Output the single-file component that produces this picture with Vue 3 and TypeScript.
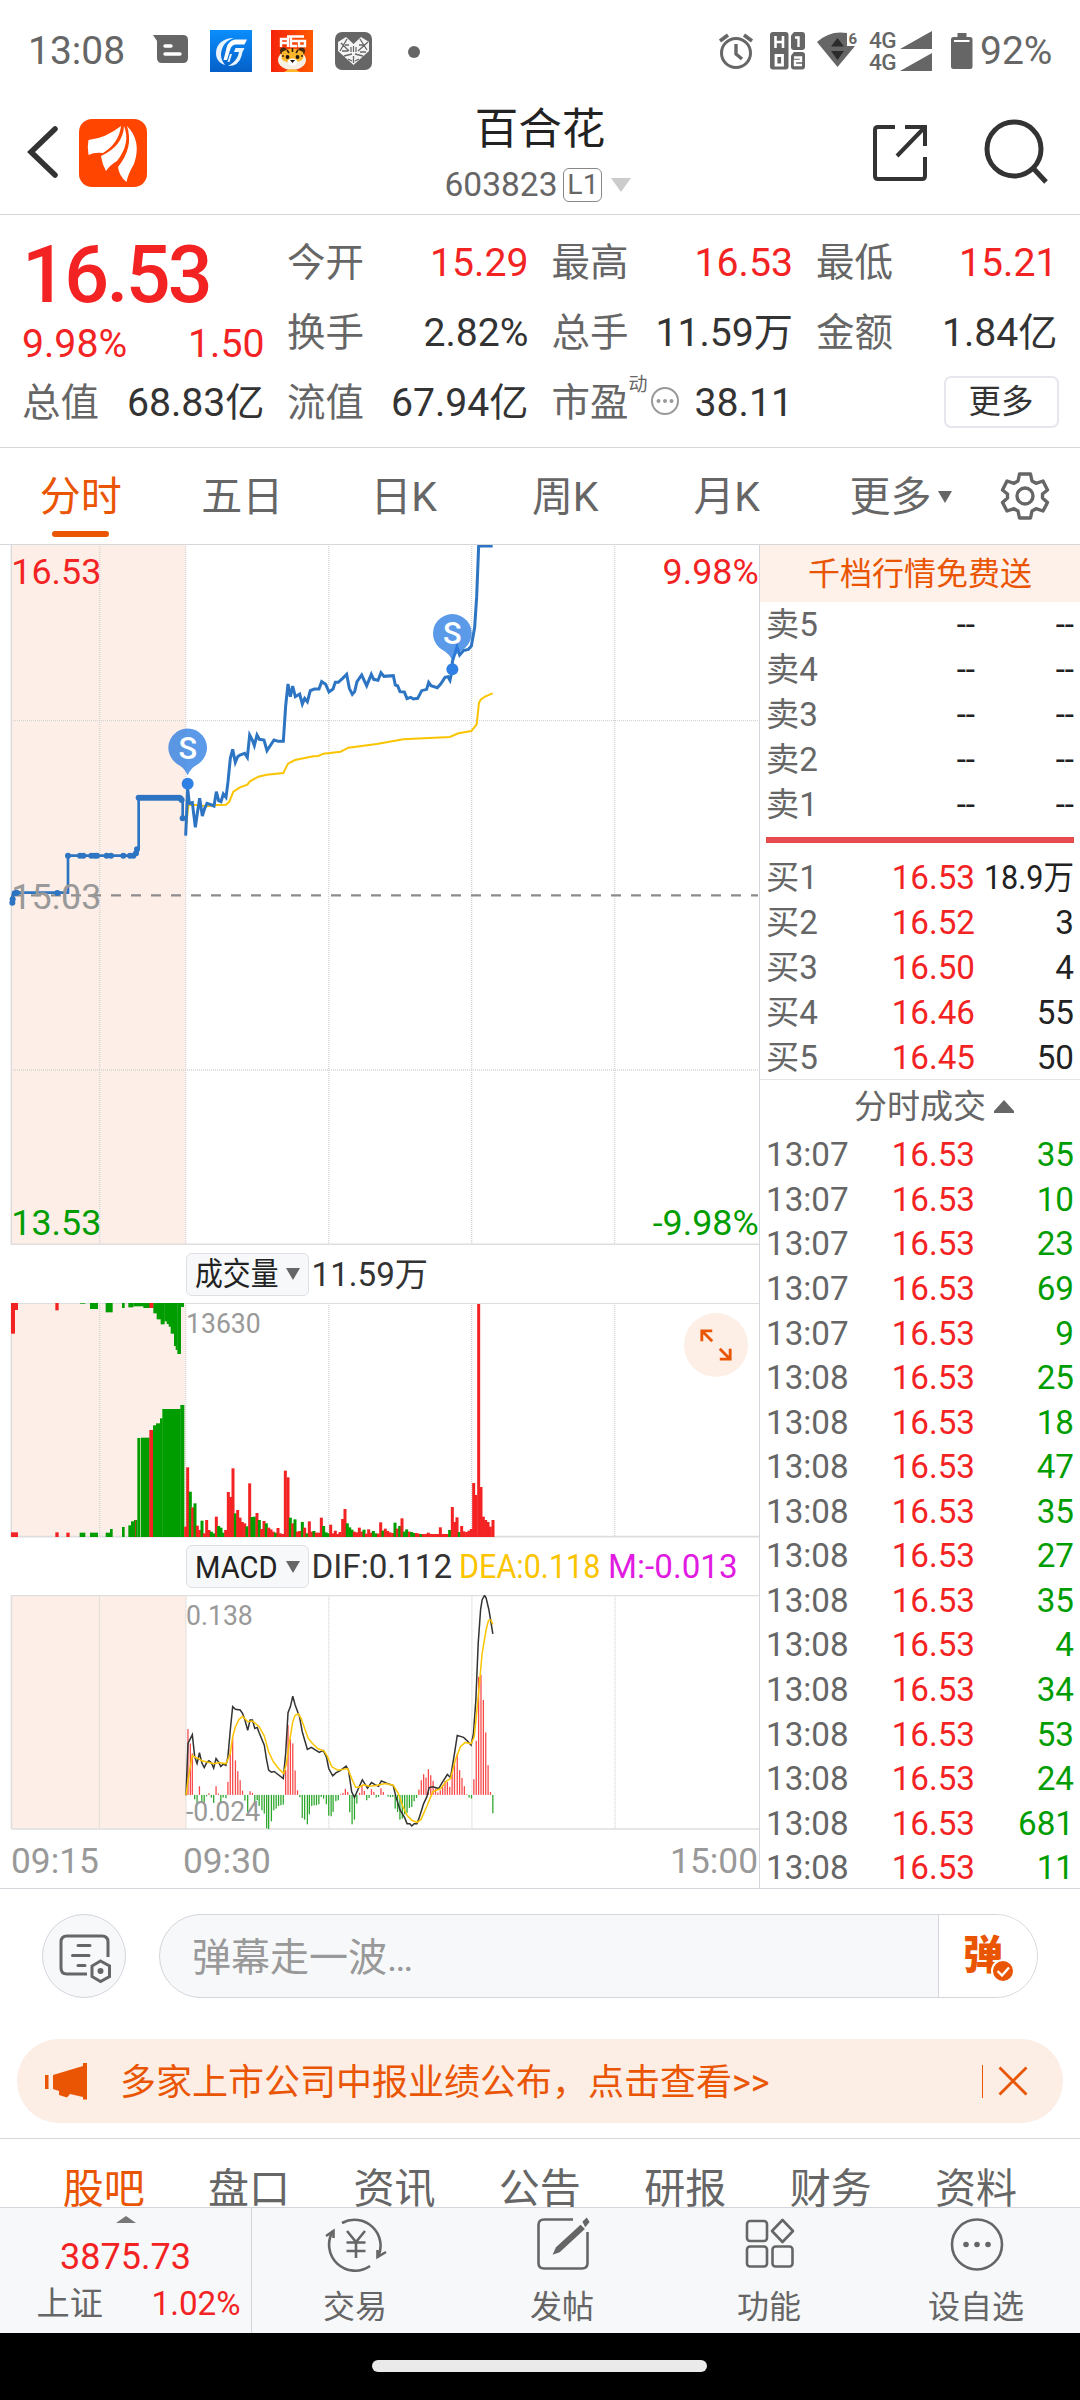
<script setup lang="ts">
interface Bar { x: number; y: number; up: boolean }

// Each entry reads <x><r|g><y>: r is a rising bar, g a falling one.
const parseBars = (src: string): Bar[] =>
  src.trim().split(/\s+/).map((item) => {
    const m = /^(\d+)([rg])(\d+)$/.exec(item)!
    return { x: Number(m[1]), up: m[2] === 'r', y: Number(m[3]) }
  })

const quotes = [
  { label: '今开', value: '15.29', red: true },
  { label: '最高', value: '16.53', red: true },
  { label: '最低', value: '15.21', red: true },
  { label: '换手', value: '2.82%', red: false },
  { label: '总手', value: '11.59万', red: false },
  { label: '金额', value: '1.84亿', red: false },
  { label: '流值', value: '67.94亿', red: false },
]

const periods = ['分时', '五日', '日K', '周K', '月K']
const sells = [5, 4, 3, 2, 1]
const buys = [
  { n: 1, price: '16.53', vol: '18.9万' },
  { n: 2, price: '16.52', vol: '3' },
  { n: 3, price: '16.50', vol: '4' },
  { n: 4, price: '16.46', vol: '55' },
  { n: 5, price: '16.45', vol: '50' },
]
const ticks = [35, 10, 23, 69, 9, 25, 18, 47, 35, 27, 35, 4, 34, 53, 24, 681, 11].map((vol, i) => ({
  time: i < 5 ? '13:07' : '13:08',
  vol,
}))
const sections = ['股吧', '盘口', '资讯', '公告', '研报', '财务', '资料']

const gridX = [299, 557, 986, 1415, 1844]

const preLine = '37,1090 37,1070 46,1058 204,1058 204,947 404,947 412,925 416,925 416,773 538,773 548,780 548,835'
const preDots: [number, number][] = [
  [37, 1088], [38, 1078], [44, 1060], [50, 1058], [172, 1059], [204, 947], [240, 947], [250, 947], [274, 947],
  [284, 947], [291, 947], [320, 947], [333, 947], [370, 947], [390, 947], [400, 947], [408, 940], [411, 928],
  ...Array.from({ length: 17 }, (_, i): [number, number] => [416 + i * 7.5, 773]),
  [541, 775], [545, 780], [548, 835],
]
const priceLine =
  '557,887 563,745 568,790 577,788 586,862 592,820 599,775 607,828 614,805 621,790 635,795 642,798 649,755 656,782 663,785 670,762 678,772 684,725 691,655 698,628 706,667 713,650 720,645 734,640 742,652 749,585 757,600 763,617 771,585 778,598 792,600 801,632 812,615 822,600 835,604 850,604 857,498 864,432 871,470 878,438 886,470 899,462 907,492 914,475 922,485 931,452 943,447 957,447 965,425 977,433 987,456 999,447 1006,427 1015,427 1027,416 1040,403 1048,445 1057,463 1064,455 1071,425 1085,405 1100,437 1114,403 1121,418 1134,421 1143,398 1152,409 1180,407 1186,435 1193,438 1200,455 1213,456 1221,476 1232,472 1240,477 1253,475 1265,452 1280,448 1286,427 1293,437 1312,443 1322,432 1335,412 1344,410 1350,421 1357,388 1357,365 1371,320 1379,345 1390,332 1405,328 1414,318 1424,262 1430,170 1436,18 1478,18'
const avgLine =
  '557,870 563,815 566,795 590,795 620,799 650,795 678,794 688,785 700,755 720,742 742,734 750,724 775,710 800,704 850,699 864,671 885,660 940,649 955,648 970,641 1022,635 1045,623 1130,612 1210,598 1350,591 1375,580 1414,573 1430,553 1437,488 1443,478 1455,470 1478,460'
const markers = [
  { x: 563, y: 731 },
  { x: 1357, y: 388 },
]

// x, width, top, bottom, rising
type Block = [number, number, number, number, boolean]
const auction: Block[] = [
  [33, 12, 219, 311, true], [44, 10, 219, 240, true], [166, 10, 219, 241, true],
  [240, 16, 219, 221, false], [270, 24, 219, 237, false], [317, 21, 219, 247, false], [366, 8, 219, 234, false],
  [385, 15, 219, 232, false], [400, 60, 219, 229, false], [430, 30, 219, 234, false], [460, 11, 219, 250, false],
  [470, 13, 219, 268, false], [482, 12, 219, 283, false], [493, 8, 219, 274, false], [500, 7, 219, 282, false],
  [506, 7, 219, 290, false], [512, 11, 219, 311, false], [522, 6, 219, 348, false], [527, 6, 219, 360, false],
  [532, 11, 219, 372, false], [542, 10, 219, 231, false], [448, 12, 219, 234, true],
  [33, 21, 907, 921, true], [166, 10, 907, 921, true], [199, 10, 908, 921, true],
  [239, 17, 908, 921, false], [270, 24, 908, 921, false], [317, 15, 908, 921, false], [330, 8, 897, 921, false],
  [366, 8, 891, 921, false], [385, 9, 886, 921, false], [393, 10, 874, 921, false], [402, 10, 870, 921, false],
  [405, 2, 870, 921, true], [412, 9, 624, 921, false], [423, 26, 623, 921, false], [448, 12, 600, 921, true],
  [459, 10, 586, 921, false], [468, 13, 580, 921, false], [480, 8, 565, 921, false], [487, 55, 537, 921, false],
  [541, 12, 525, 921, false],
]

const volumeBars = parseBars(`
557r890 563r712 571g785 578r832 585g820 592r887 599r900 606g872 613r910 620r870 627r900 634g905 641g910 649r860
656g888 663g893 670g908 677r900 685r786 692r801 699r715 706g850 713r840 720r863 727r876 734r880 741g889 749r760
756g861 763g860 771r849 778g870 785r897 792r873 799g880 806r893 813r898 820r905 827g908 834r894 841r910 849r912
856r722 864r742 871g863 878r880 885g868 892r905 899r903 907g876 914r893 921g910 928r874 935r905 942g903 949r908
956r908 964r863 971g888 978g907 985g910 992r884 999r910 1006r902 1013r912 1020r906 1028r867 1035r837 1042g880
1049g892 1056g899 1063r905 1070r907 1078r893 1085r905 1092g899 1099r911 1106r898 1113r908 1120g903 1128g910
1135r911 1142r877 1149g902 1156r896 1163r903 1170r907 1178r909 1185g878 1192r896 1199g888 1206r865 1213g905
1220g898 1228r905 1235g906 1242g909 1249r909 1256r911 1263g912 1270r912 1278r912 1285r908 1292r912 1300r912
1307r912 1314r912 1321r892 1328r912 1335r912 1342r912 1349g900 1357r831 1364r876 1371r862 1378g906 1385r888
1392r904 1400r906 1407r902 1414r897 1421r759 1428r795 1436r222 1443r771 1450r860 1457r870 1464r876 1471r890 1479r870`)

const macdBars = parseBars(`
96r567 102r610 107r640 113g777 119g788 125r738 131g787 137g787 143g768 149r759 155g772 161g788 167r738 173r760
179g787 185g772 192g774 197r725 203r628 209r590 216r661 222r693 228r720 234r751 240g781 247g815 253r753 259r758
265g785 271g780 276g797 283g810 289g820 295g864 300g866 307g843 313g810 319g805 325g797 331g795 337g793 343r690
349r555 355r597 361r610 367r691 373r750 379g771 385g833 391g838 398g852 403g822 409g797 415g795 421g795 427g792
433g770 439g775 446g792 452g826 458g828 463g815 470g783 476g780 482r762 488r758 494r746 500r755 505g816 511g852
517g838 523g790 530r758 536r735 542r752 548g780 554g773 560r747 566r755 572g772 578g770 584r744 590r755 602g769
608g771 614g770 620g805 626g815 632g838 638g835 644g822 650g818 656g803 662g800 668g783 674g773 680r748 686r720
692r702 698r712 704r687 710r705 716r722 722r745 728r757 734r750 740r740 746r722 752r725 758r740 764r700 770r668
777r640 783r690 789r713 795r738 801r762 807g772 813g775 819r717 825r602 831r411 837r405 843r480 849r577 855r675
861r755 867g819`)

const difLine =
  '91,765 96,610 107,584 113,650 119,670 125,638 131,668 137,682 143,668 149,662 155,668 161,684 167,655 173,665 179,679 185,672 192,676 197,650 203,570 209,500 216,508 228,510 234,520 240,540 247,571 253,540 259,540 265,565 271,562 276,578 289,615 295,660 300,690 307,696 314,694 337,715 343,640 349,518 355,500 361,469 367,495 378,530 385,575 391,600 398,628 408,622 428,637 438,631 446,650 452,685 462,707 470,698 480,692 496,678 502,690 510,755 517,772 525,750 537,719 543,730 550,744 560,727 570,734 578,738 585,722 600,730 615,736 622,770 632,808 644,832 650,850 657,850 662,857 668,850 675,850 680,835 692,790 700,770 706,742 715,740 730,745 740,725 752,703 760,712 770,640 777,586 793,592 802,602 812,615 818,580 824,480 830,310 836,210 840,180 846,167 850,175 857,210 867,282'
const deaLine =
  '91,765 96,720 107,646 115,652 122,655 131,662 150,667 161,671 175,667 192,671 203,640 209,590 216,560 225,538 234,529 247,545 259,543 276,560 289,588 300,635 312,665 325,685 338,700 345,670 352,610 361,545 367,526 375,522 382,535 400,595 412,612 425,626 440,632 448,648 460,680 475,690 500,685 510,715 520,741 528,741 540,734 555,738 575,735 595,730 615,735 628,760 640,800 650,825 662,840 675,846 685,838 700,798 715,755 735,745 750,722 760,715 772,660 785,620 797,607 812,611 820,590 830,470 840,340 850,270 856,242 862,241 867,254'
</script>

<template>
  <div class="screen">
    <div class="status">
      <span class="clock">13:08</span>
      <svg class="st-msg" width="36" height="29" viewBox="0 0 36 29">
        <path d="M0 0H30Q35 0 35 5V23Q35 28 30 28H9Q4 28 4 23V6Z" fill="#666" />
        <path d="M12 11H18M12 19H27" stroke="#fff" stroke-width="3.4" stroke-linecap="round" />
      </svg>
      <svg class="st-blue" width="42" height="42" viewBox="0 0 42 42">
        <defs>
          <linearGradient id="blueFill" x1="0" y1="0" x2="0" y2="1">
            <stop offset="0" stop-color="#0a8dfc" />
            <stop offset="1" stop-color="#0560c8" />
          </linearGradient>
        </defs>
        <rect width="42" height="42" fill="url(#blueFill)" />
        <path d="M24 8C12 8 6 15 6 23C6 29 9 33 15 35C11 30 10 25 12 19C14 13 18 10 24 8Z" fill="#e8f3ff" />
        <path d="M37 9.500H25Q18 11 16.500 18L13.500 30H17L20 20Q21.500 14.500 26 14.500H34.500Z" fill="#fff" />
        <path d="M34.500 18H25.500L24 22H29Q28 29 22 33.500L18 36Q29 36 31.500 26L32.500 22Z" fill="#e8f3ff" />
        <path d="M22 24L19.500 32L17.500 32L20 24Z" fill="#e8f3ff" />
      </svg>
      <svg class="st-tiger" width="42" height="42" viewBox="0 0 42 42">
        <defs>
          <linearGradient id="redFill" x1="0" y1="0" x2="1" y2="0">
            <stop offset="0" stop-color="#f5230c" />
            <stop offset="1" stop-color="#ff5a00" />
          </linearGradient>
        </defs>
        <rect width="42" height="42" fill="url(#redFill)" />
        <ellipse cx="21" cy="30" rx="14" ry="10" fill="#f5efe4" />
        <circle cx="12.500" cy="21" r="3.500" fill="#4a2a10" />
        <circle cx="30.500" cy="21" r="3.500" fill="#4a2a10" />
        <path d="M11 22Q21 15 32 22Q34 29 29 31Q21 35 13 31Q9 29 11 22Z" fill="#fdb62b" />
        <path d="M16 20L18 23M21.500 18V22M27 20L25 23M11 26H13M32 26H30" stroke="#35200f" stroke-width="1.600" />
        <circle cx="16.500" cy="27" r="1.900" fill="#1d1410" />
        <circle cx="26.500" cy="27" r="1.900" fill="#1d1410" />
        <ellipse cx="21.500" cy="32" rx="5" ry="3.500" fill="#fff" />
        <path d="M19 30H24L21.500 33Z" fill="#1d1410" />
        <path d="M13 42Q21 36 29 42Z" fill="#fdb62b" />
        <path d="M10 17V9H17V17M10 13H17M16 6.500H33M20 7V16H26M20 11H30M28 10V16H34V11H28" fill="none" stroke="#fff" stroke-width="2.400" />
      </svg>
      <svg class="st-heart" width="37" height="38" viewBox="0 0 37 38">
        <rect width="37" height="38" rx="7" fill="#666" />
        <path d="M18.500 33L3 19V10L11 5L18.500 12L26 5L34 10V19Z" fill="#f4f4f4" />
        <path d="M6 11L14 19M12 7L5 19M9 24L17 22M25 7L32 18M33 10L23 19M28 24L20 22M18.500 24V31M10 13H14M24 13H29M13 27L17 29M24 27L20 29M7 19H13M25 20H31" stroke="#666" stroke-width="1.300" />
        <path d="M16 15V20M18.500 14V20M21 15V20" stroke="#666" stroke-width="1.200" />
      </svg>
      <span class="st-dot"></span>
      <span class="grow"></span>
      <svg class="st-alarm" width="36" height="38" viewBox="0 0 36 38">
        <circle cx="18" cy="21" r="14.500" fill="none" stroke="#666" stroke-width="3" />
        <path d="M18 12V22L24 27" fill="none" stroke="#666" stroke-width="3.400" />
        <path d="M2 9L10 3M34 9L26 3" stroke="#666" stroke-width="3.600" />
      </svg>
      <svg class="st-hd" width="36" height="38" viewBox="0 0 36 38">
        <rect width="18.500" height="37.500" rx="3" fill="#666" />
        <path d="M5.500 4V16M13 4V16M5.500 10H13" stroke="#fff" stroke-width="2.600" />
        <path d="M6 23.500H12.500V33H6Z" fill="none" stroke="#fff" stroke-width="2.800" />
        <path d="M24 0H32Q35 0 35 3V15Q35 18 32 18H24Q21 18 21 15V3.500Z" fill="#666" />
        <path d="M24 20H32Q35 20 35 23V34.500Q35 37.500 32 37.500H24Q21 37.500 21 34.500V23.500Z" fill="#666" />
        <path d="M25 5.500H28.500V15" fill="none" stroke="#fff" stroke-width="2.400" />
        <path d="M24 25.500H31V29H25V33H32" fill="none" stroke="#fff" stroke-width="2.400" />
      </svg>
      <svg class="st-wifi" width="44" height="38" viewBox="0 0 44 38">
        <path d="M0 10Q13-2 30 1V14H38L20.500 35Z" fill="#666" />
        <path d="M20.500 6L27 14.500H14ZM20.500 28L27 19H14Z" fill="#2b2b2b" />
        <text x="31.500" y="12" class="st-six">6</text>
      </svg>
      <span class="st-net"><i>4G</i><i>4G</i></span>
      <svg class="st-signal" width="32" height="40" viewBox="0 0 32 40">
        <path d="M0 18L32 0V18ZM0 40L32 22V40Z" fill="#666" />
      </svg>
      <svg class="st-batt" width="22" height="36" viewBox="0 0 22 36">
        <path d="M6.500 0H15.500V4H19Q21.500 4 21.500 6.500V33.500Q21.500 36 19 36H2.500Q0 36 0 33.500V6.500Q0 4 2.500 4H6.500Z" fill="#666" />
        <path d="M3 8H18.500" stroke="#fff" stroke-width="2" />
      </svg>
      <span class="batt">92%</span>
    </div>

    <header class="head">
      <svg class="back" width="32" height="52" viewBox="0 0 32 52">
        <path d="M28 3L4 26L28 49" fill="none" stroke="#333" stroke-width="5.500" stroke-linecap="round" stroke-linejoin="miter" />
      </svg>
      <svg class="logo" width="68" height="68" viewBox="0 0 68 68">
        <rect width="68" height="68" rx="13" fill="#ff4500" />
        <path d="M42 7Q27 19 9.500 21Q8 28 9.500 36Q15 33 24 34Q40 24 42 7Z" fill="#fff" />
        <path d="M45 7Q44 27 22 37Q23 45 27 52Q31 46 38 42Q52 24 45 7Z" fill="#fff" />
        <path d="M48 7Q55 28 39 48Q40 57 47.500 63Q49 55 55 45Q63 22 48 7Z" fill="#fff" />
      </svg>
      <div class="title">
        <div class="name">百合花</div>
        <div class="code"><span>603823</span><b>L1</b>
          <svg width="20" height="14" viewBox="0 0 20 14"><path d="M0 0H20L10 14Z" fill="#ccc" /></svg>
        </div>
      </div>
      <svg class="share" width="58" height="58" viewBox="0 0 58 58">
        <path d="M23 3H6Q3 3 3 6V52Q3 55 6 55H50Q53 55 53 52V33M33 3H53V22M53 3L25 32" fill="none" stroke="#333" stroke-width="4" />
      </svg>
      <svg class="search" width="68" height="68" viewBox="0 0 68 68">
        <circle cx="30" cy="31" r="27" fill="none" stroke="#333" stroke-width="5" />
        <path d="M49 50L62 64" stroke="#333" stroke-width="5" />
      </svg>
    </header>

    <section class="quote">
      <div class="q-left">
        <div class="price">16.53</div>
        <div class="pair change"><span>9.98%</span><span>1.50</span></div>
        <div class="pair"><label>总值</label><span>68.83亿</span></div>
      </div>
      <div class="q-grid">
        <div v-for="q in quotes" :key="q.label" class="pair">
          <label>{{ q.label }}</label><span :class="{ red: q.red }">{{ q.value }}</span>
        </div>
        <div class="pair pe">
          <label>市盈<sup>动</sup></label>
          <svg width="30" height="30" viewBox="0 0 30 30">
            <circle cx="15" cy="15" r="13" fill="none" stroke="#999" stroke-width="2" />
            <circle cx="8.500" cy="15" r="2" fill="#999" /><circle cx="15" cy="15" r="2" fill="#999" /><circle cx="21.500" cy="15" r="2" fill="#999" />
          </svg>
          <span>38.11</span>
        </div>
        <div class="more-cell"><button>更多</button></div>
      </div>
    </section>

    <nav class="periods">
      <span v-for="(p, i) in periods" :key="p" :class="{ on: i === 0 }">{{ p }}</span>
      <span class="p-more">更多<svg width="14" height="12" viewBox="0 0 14 12"><path d="M0 0H14L7 12Z" fill="#666" /></svg></span>
      <svg class="gear" width="50" height="50" viewBox="0 0 50 50">
        <path d="M19.500 3H30.500L32 10L36 12.300L43 10L47.500 19L42.500 23V27L47.500 31.500L43 40L36 37.700L32 40L30.500 47H19.500L18 40L14 37.700L7 40L2.500 31.500L7.500 27V23L2.500 19L7 10L14 12.300L18 10Z" fill="none" stroke="#666" stroke-width="3.400" stroke-linejoin="round" />
        <circle cx="25" cy="25" r="8" fill="none" stroke="#666" stroke-width="3.400" />
      </svg>
    </nav>

    <div class="board">
      <div class="charts">
        <div class="pane main">
          <svg width="759" height="700" viewBox="0 15 2277 2100">
            <rect x="36" y="12" width="521" height="2103" fill="#fdeee7" />
            <path v-for="x in gridX" :key="x" :d="`M${x} 12V2115`" class="dots" />
            <path d="M33 542H2274M33 1590H2274" class="dots" />
            <path d="M34 12V2115" stroke="#d9d9dd" stroke-width="4" />
            <path d="M33 2113H2277" stroke="#dedede" stroke-width="5" />
            <path d="M33 1066H2274" stroke="#8c8c8c" stroke-width="7" stroke-dasharray="30 30" />
            <text x="34" y="131" class="ax" fill="#f42323">16.53</text>
            <text x="34" y="2085" class="ax" fill="#009d00">13.53</text>
            <text x="2276" y="131" class="ax" fill="#f42323" text-anchor="end">9.98%</text>
            <text x="2276" y="2085" class="ax" fill="#009d00" text-anchor="end">-9.98%</text>
            <polyline :points="avgLine" fill="none" stroke="#fbc400" stroke-width="6" />
            <polyline :points="preLine" fill="none" stroke="#2d75c3" stroke-width="8" />
            <circle v-for="(d, i) in preDots" :key="i" :cx="d[0]" :cy="d[1]" r="9" fill="#2d75c3" />
            <text x="34" y="1107" class="ax" fill="#999">15.03</text>
            <polyline :points="priceLine" fill="none" stroke="#2d75c3" stroke-width="9" />
            <g v-for="m in markers" :key="m.x" :transform="`translate(${m.x} ${m.y})`">
              <path d="M0-25Q-8-46-28-57A58 58 0 1 1 28-57Q8-46 0-25Z" fill="#2d7de2" fill-opacity=".78" />
              <circle r="18" fill="#2f80e4" />
              <text y="-75" class="pin">S</text>
            </g>
          </svg>
        </div>

        <div class="bar-head">
          <span class="pill"><em class="cn">成交量</em><svg width="14" height="12" viewBox="0 0 14 12"><path d="M0 0H14L7 12Z" fill="#666" /></svg></span>
          <span class="val">11.59万</span>
        </div>
        <div class="pane vol">
          <svg width="759" height="235" viewBox="0 219 2277 705">
            <rect x="36" y="219" width="521" height="702" fill="#fdeee7" />
            <path v-for="x in gridX" :key="x" :d="`M${x} 219V920`" class="dots" />
            <path d="M34 219V921" stroke="#d9d9dd" stroke-width="4" />
            <path d="M33 220.500H2277" stroke="#dedede" stroke-width="3" />
            <path d="M33 920H2277" stroke="#dedede" stroke-width="5" />
            <rect v-for="(b, i) in auction" :key="'a' + i" :x="b[0]" :width="b[1]" :y="b[2]" :height="b[3] - b[2]" :fill="b[4] ? '#f42323' : '#009d00'" />
            <rect v-for="b in volumeBars" :key="b.x" :x="b.x - 4.5" width="9" :y="b.y" :height="921 - b.y" :fill="b.up ? '#f42323' : '#009d00'" />
          </svg>
          <span class="scale">13630</span>
          <span class="expand">
            <svg width="34" height="34" viewBox="0 0 36 36">
              <path d="M3 14V3H14M3 3L14 14M33 22V33H22M33 33L22 22" fill="none" stroke="#ea5504" stroke-width="3" />
            </svg>
          </span>
        </div>

        <div class="bar-head second">
          <span class="pill"><em class="en">MACD</em><svg width="14" height="12" viewBox="0 0 14 12"><path d="M0 0H14L7 12Z" fill="#666" /></svg></span>
          <span class="val">DIF:0.112</span>
          <span class="val dea">DEA:0.118</span>
          <span class="val m">M:-0.013</span>
        </div>
        <div class="pane macd">
          <svg width="759" height="235" viewBox="-379.4 166 1919.500 703" preserveAspectRatio="none">
            <rect x="-349" y="165" width="440" height="700" fill="#fdeee7" />
            <path v-for="x in [-128, 91, 452, 814, 1176]" :key="x" :d="`M${x} 165V865`" class="dots thin" />
            <path d="M-350.500 165V866M-350 167.500H1540M-350 866H1540" stroke="#dedede" stroke-width="1.500" vector-effect="non-scaling-stroke" />
            <rect v-for="b in macdBars" :key="b.x" :x="b.x - 1.6" width="3.2" :y="b.up ? b.y : 764" :height="Math.abs(b.y - 764)" :fill="b.up ? '#f84848' : '#2ba72b'" />
            <polyline :points="difLine" class="thinline" stroke="#333" />
            <polyline :points="deaLine" class="thinline" stroke="#fbc400" />
          </svg>
          <span class="scale">0.138</span>
          <span class="scale low">-0.024</span>
        </div>
        <div class="times"><span>09:15</span><span class="t2">09:30</span><span class="t3">15:00</span></div>
      </div>

      <aside class="depth">
        <div class="promo">千档行情免费送</div>
        <div v-for="n in sells" :key="n" class="row">
          <span class="c1">卖{{ n }}</span><span class="c2 dark">--</span><span class="c3">--</span>
        </div>
        <div class="ratio"></div>
        <div v-for="b in buys" :key="b.n" class="row">
          <span class="c1">买{{ b.n }}</span><span class="c2">{{ b.price }}</span><span class="c3" :class="{ tight: b.vol.length > 4 }">{{ b.vol }}</span>
        </div>
        <div class="deals">分时成交<svg width="20" height="13" viewBox="0 0 20 13"><path d="M10 0L20 11V13H0V11Z" fill="#666" /></svg></div>
        <div v-for="(t, i) in ticks" :key="i" class="row tick">
          <span class="c1">{{ t.time }}</span><span class="c2">16.53</span><span class="c3 green">{{ t.vol }}</span>
        </div>
      </aside>
    </div>

    <div class="danmu">
      <span class="round">
        <svg width="84" height="84" viewBox="0 0 84 84">
          <path d="M66 43V28Q66 22 60 22H25Q19 22 19 28V54Q19 60 25 60H45" fill="none" stroke="#666" stroke-width="3" />
          <path d="M36 31.500H48M30.500 41.500H47M36 51.500H43" stroke="#666" stroke-width="3" stroke-linecap="round" />
          <path d="M58.500 47L67.500 52V62.500L58.500 67.500L50 62.500V52Z" fill="#f7f8fa" stroke="#666" stroke-width="3" />
          <circle cx="58.500" cy="57" r="3" fill="#666" />
        </svg>
      </span>
      <div class="input">
        <span class="hint">弹幕走一波…</span>
        <span class="send">弹
          <svg width="24" height="24" viewBox="0 0 24 24">
            <circle cx="12" cy="12" r="11" fill="#ea5504" stroke="#fff" stroke-width="2" />
            <path d="M6.500 12L11 16.500L18 8.500" fill="none" stroke="#fff" stroke-width="2.400" />
          </svg>
        </span>
      </div>
    </div>

    <div class="notice">
      <svg class="horn" width="42" height="37" viewBox="0 0 42 37">
        <path d="M0 12H3.500V26H0ZM8 12L38 3V0H42V36.500H38V34L25 31L22 34.500L14 32V28L8 26Z" fill="#ea5504" />
      </svg>
      <span class="n-text">多家上市公司中报业绩公布，点击查看&gt;&gt;</span>
      <i></i>
      <svg width="30" height="30" viewBox="0 0 30 30"><path d="M1.500 1.500L28.500 28.500M28.500 1.500L1.500 28.500" stroke="#ea5504" stroke-width="2.800" /></svg>
    </div>

    <div class="sections">
      <span v-for="(s, i) in sections" :key="s" :class="{ on: i === 0 }">{{ s }}</span>
    </div>

    <footer class="bottom">
      <div class="index">
        <svg width="20" height="7" viewBox="0 0 20 7"><path d="M10 0L20 7H0Z" fill="#777" /></svg>
        <strong>3875.73</strong>
        <div><span>上证</span><span class="red">1.02%</span></div>
      </div>
      <div class="item">
        <svg width="64" height="56" viewBox="0 0 64 56" fill="none" stroke="#666" stroke-width="2.600">
          <path d="M18 7A26 26 0 0 1 54 41M46 50A26 26 0 0 1 9 15" />
          <path d="M62 36L53.500 41V34M2 20L9.500 15V22" />
          <path d="M23 15L32 26L41 15M32 26V42M22.500 26.500H41.500M22.500 35H41.500" />
        </svg>
        <span>交易</span>
      </div>
      <div class="item">
        <svg width="64" height="56" viewBox="0 0 64 56" fill="none" stroke="#666" stroke-width="2.600">
          <path d="M42 3.500H13Q7.500 3.500 7.500 9V47Q7.500 52.500 13 52.500H51Q56.500 52.500 56.500 47V16" />
          <path d="M49.500 10.500L52 13L28 35L24 36.500L26 32ZM53 6L55.500 3.500L57 6L54.500 9Z" fill="#666" />
        </svg>
        <span>发帖</span>
      </div>
      <div class="item">
        <svg width="64" height="56" viewBox="0 0 64 56" fill="none" stroke="#666" stroke-width="2.600">
          <rect x="9" y="5" width="20" height="20" rx="3" /><rect x="9" y="30.500" width="20" height="20" rx="3" /><rect x="34.500" y="30.500" width="20" height="20" rx="3" />
          <path d="M44.500 4L55 15L44.500 26L34 15Z" stroke-linejoin="round" />
        </svg>
        <span>功能</span>
      </div>
      <div class="item">
        <svg width="64" height="56" viewBox="0 0 64 56">
          <circle cx="32" cy="28.500" r="25" fill="none" stroke="#666" stroke-width="2.600" />
          <circle cx="21" cy="28.500" r="2.800" fill="#666" /><circle cx="32" cy="28.500" r="2.800" fill="#666" /><circle cx="43" cy="28.500" r="2.800" fill="#666" />
        </svg>
        <span>设自选</span>
      </div>
    </footer>
    <div class="gesture"><i></i></div>
  </div>
</template>

<style>
body { margin: 0; background: #fff; }
</style>

<style scoped>
.screen {
  width: 1080px;
  height: 2400px;
  overflow: hidden;
  display: flex;
  flex-direction: column;
  background: #fff;
  color: #333;
  font-family: Roboto, "Noto Sans CJK SC", sans-serif;
  line-height: 1;
}
.screen > * { flex: none; box-sizing: border-box; }
svg { display: block; flex: none; }
i, em { font-style: normal; }
.red { color: #f42323 !important; }
.grow { flex: 1; }

.status { height: 102px; display: flex; align-items: center; padding: 0 29px 0 28px; font-size: 39px; color: #666; }
.clock { width: 125px; line-height: 46px; }
.st-msg { margin-top: -3px; margin-right: 21px; }
.st-blue { margin-right: 19px; }
.st-tiger { margin-right: 22px; }
.st-heart { margin-right: 36px; }
.st-dot { width: 12px; height: 12px; border-radius: 50%; background: #666; margin-top: 1px; }
.st-alarm { margin-right: 16px; }
.st-hd { margin-right: 11px; }
.st-wifi { margin-right: 8px; overflow: visible; }
.st-six { font-size: 15px; font-weight: 700; fill: #666; }
.st-net { width: 31px; display: flex; flex-direction: column; font-size: 22.5px; font-weight: 500; line-height: 22px; letter-spacing: -0.5px; }
.st-net i { height: 22px; }
.st-signal { margin-right: 19px; }
.st-batt { margin-right: 7px; }
.batt { line-height: 46px; width: 71px; }

.head { height: 113px; display: flex; align-items: flex-start; border-bottom: 1px solid #d4d6dc; padding-left: 27px; }
.back { margin-top: 24px; }
.logo { margin-top: 16.500px; margin-left: 20px; }
.title { flex: 1; display: flex; flex-direction: column; align-items: center; }
.name { font-size: 43.500px; line-height: 50px; margin-top: 3px; color: #222; margin-left: 61px; }
.code { display: flex; align-items: center; font-size: 33.500px; line-height: 40px; color: #666; margin-left: 57px; margin-top: 10px; }
.code b { font-weight: 400; font-size: 28.500px; line-height: 32px; width: 37px; text-align: center; border: 1.500px solid #888; border-radius: 6px; margin: 0 9px 0 6px; }
.share { margin-top: 21.500px; margin-right: 54px; }
.search { margin-top: 16px; margin-right: 28px; }

.quote { height: 233px; display: flex; padding: 13px 22px 0; border-bottom: 1px solid #d6d7da; }
.q-left { width: 242.500px; margin-right: 22.500px; }
.q-grid { flex: 1; display: grid; grid-template-columns: repeat(3, 241.500px); column-gap: 23px; grid-auto-rows: 70px; }
.price { height: 92px; line-height: 95px; font-size: 79px; font-weight: 500; color: #f42323; letter-spacing: -2.700px; }
.pair { height: 70px; display: flex; align-items: center; justify-content: space-between; font-size: 39.200px; line-height: 48px; white-space: nowrap; }
.pair label { color: #666; font-size: 38.500px; }
.pair.change { height: 48px; line-height: 46px; color: #f42323; padding-bottom: 1px; box-sizing: border-box; }
.pe label { position: relative; }
.pe sup { position: absolute; left: 77px; top: -4px; font-size: 19px; line-height: 20px; }
.pe svg { margin-left: 21px; margin-right: auto; margin-top: -5px; }
.more-cell { display: flex; justify-content: flex-end; padding-top: 8px; }
.more-cell button { width: 115px; height: 52px; border: 2px solid #e6e7ee; border-radius: 7px; background: #fff; font: 32.500px/46px Roboto, "Noto Sans CJK SC", sans-serif; color: #333; padding: 0; margin-right: -1px; }

.periods { height: 97px; display: flex; align-items: center; border-bottom: 1px solid #d6d7da; font-size: 41px; color: #666; }
.periods span { width: 161.500px; text-align: center; line-height: 50px; padding-top: 2px; position: relative; }
.periods .on { color: #ea5504; }
.periods .on::after { content: ""; position: absolute; left: 52px; top: 61px; width: 57px; height: 6px; border-radius: 3px; background: #ea5504; }
.periods .p-more { width: 192px; box-sizing: border-box; display: flex; align-items: center; justify-content: center; gap: 6px; padding-right: 6px; }

.board { height: 1344px; display: flex; border-bottom: 1px solid #d4d6dc; overflow: hidden; }
.charts { width: 759px; flex: none; }
.depth { flex: 1; box-sizing: border-box; border-left: 1px solid #d4d6dc; }
.pane { position: relative; }
.pane.main { height: 700px; }
.pane.vol, .pane.macd { height: 235px; }
.dots { stroke: #d4d4d4; stroke-width: 4; stroke-dasharray: 3 3; fill: none; }
.dots.thin { vector-effect: non-scaling-stroke; stroke-width: 1.300; stroke-dasharray: 1 1; }
.thinline { fill: none; stroke-width: 1.500; vector-effect: non-scaling-stroke; }
.ax { font-size: 107.500px; }
.pin { font-size: 92px; font-weight: 500; fill: #fff; text-anchor: middle; }
.bar-head { height: 58px; display: flex; align-items: center; padding-left: 186px; font-size: 33.200px; white-space: nowrap; }
.bar-head.second { height: 57px; }
.pill { box-sizing: border-box; width: 123px; height: 43px; border: 1px solid #dddfe5; border-radius: 6px; background: #f7f8fa; display: flex; align-items: center; justify-content: space-between; padding: 0 8px; margin-right: 2.500px; color: #222; }
.pill em { font-size: 32px; line-height: 40px; transform-origin: left; display: block; width: 86px; }
.pill .cn { transform: scaleX(.87); }
.pill .en { transform: scaleX(.91); }
.val { display: block; line-height: 40px; padding-top: 2px; transform-origin: left; }
.second .val { padding-top: 0; }
.dea { color: #fbc400; margin-left: 7px; transform: scaleX(.92); width: 141px; }
.m { color: #e21be2; margin-left: 8px; }
.scale { position: absolute; left: 186px; top: 5px; font-size: 28px; line-height: 32px; color: #999; transform: scaleX(.95); transform-origin: left; }
.scale.low { top: auto; bottom: 2px; }
.expand { position: absolute; left: 684px; top: 10px; width: 64px; height: 64px; border-radius: 50%; background: #fdeee6; display: flex; align-items: center; justify-content: center; }
.times { display: flex; height: 58px; align-items: center; font-size: 35.300px; color: #999; padding: 5px 1px 0 11px; box-sizing: border-box; }
.times .t2 { margin-left: 84px; }
.times .t3 { margin-left: auto; }

.promo { height: 57px; background: #fdf1ea; color: #ea5504; font-size: 32px; line-height: 59px; text-align: center; }
.row { height: 45px; display: flex; align-items: center; font-size: 33.200px; line-height: 45px; padding: 0 6px 0 6px; color: #666; white-space: nowrap; }
.c1 { width: 90px; }
.c2 { width: 119px; text-align: right; color: #f42323; }
.c2.dark, .c3 { color: #222; }
.c3 { flex: 1; text-align: right; }
.c3.tight { transform: scaleX(.92); transform-origin: right; }
.c3.green { color: #009d00; }
.ratio { height: 6px; background: #e84b4e; margin: 10px 6px 12px; }
.deals { height: 54px; margin-top: -1px; border-top: 1px solid #e3e4e8; display: flex; justify-content: center; align-items: center; gap: 8px; font-size: 33px; color: #666; padding-left: 28px; box-sizing: border-box; }
.row.tick { height: 44.570px; line-height: 44px; }

.danmu { height: 150px; display: flex; padding: 25px 42px 0; }
.round { width: 84px; height: 84px; box-sizing: border-box; border: 1px solid #d4d6dc; border-radius: 50%; background: #f7f8fa; margin-right: 33px; }
.round svg { margin: -1px; }
.input { width: 879px; height: 84px; box-sizing: border-box; border: 1px solid #d4d6dc; border-radius: 42px; background: #f7f8fa; overflow: hidden; display: flex; }
.hint { flex: 1; padding-left: 32px; font-size: 39px; line-height: 86px; height: 82px; color: #999; }
.send { width: 99px; border-left: 1px solid #d4d6dc; background: #fff; position: relative; font-size: 40px; font-weight: 900; line-height: 81px; color: #ea5504; padding-left: 24px; box-sizing: border-box; }
.send svg { position: absolute; left: 52px; top: 44px; }

.notice { height: 84px; margin: 0 17px 15px; border-radius: 42px; background: #fcede5; display: flex; align-items: center; color: #ea5504; padding: 0 35px 0 28px; }
.n-text { margin-left: 33px; flex: 1; font-size: 36px; line-height: 89px; height: 84px; }
.notice i { width: 1.500px; height: 33px; background: #ea5504; margin-right: 15px; }

.sections { height: 69px; border-top: 1px solid #d6d7da; display: flex; padding: 0 31px; overflow: hidden; font-size: 41px; color: #666; }
.sections span { width: 145.400px; text-align: center; line-height: 101px; height: 101px; }
.sections .on { color: #ea5504; }

.bottom { height: 126px; background: #f7f8fa; border-top: 1px solid #d4d6dc; display: flex; }
.index { width: 252px; box-sizing: border-box; border-right: 1px solid #d4d6dc; display: flex; flex-direction: column; align-items: center; padding-top: 8px; }
.index strong { font-weight: 400; font-size: 36px; line-height: 44px; color: #f42323; margin-top: 12px; }
.index div { width: 204px; margin-left: 26px; display: flex; justify-content: space-between; font-size: 33.200px; line-height: 40px; color: #666; margin-top: 5px; }
.item { width: 207px; display: flex; flex-direction: column; align-items: center; padding-top: 8px; font-size: 32px; color: #666; }
.item span { line-height: 40px; margin-top: 15px; margin-left: -1px; }
.gesture { height: 67px; background: #000; display: flex; justify-content: center; padding-top: 27px; }
.gesture i { width: 335px; height: 12px; border-radius: 6px; background: #eaeaea; margin-right: 1px; }
</style>
